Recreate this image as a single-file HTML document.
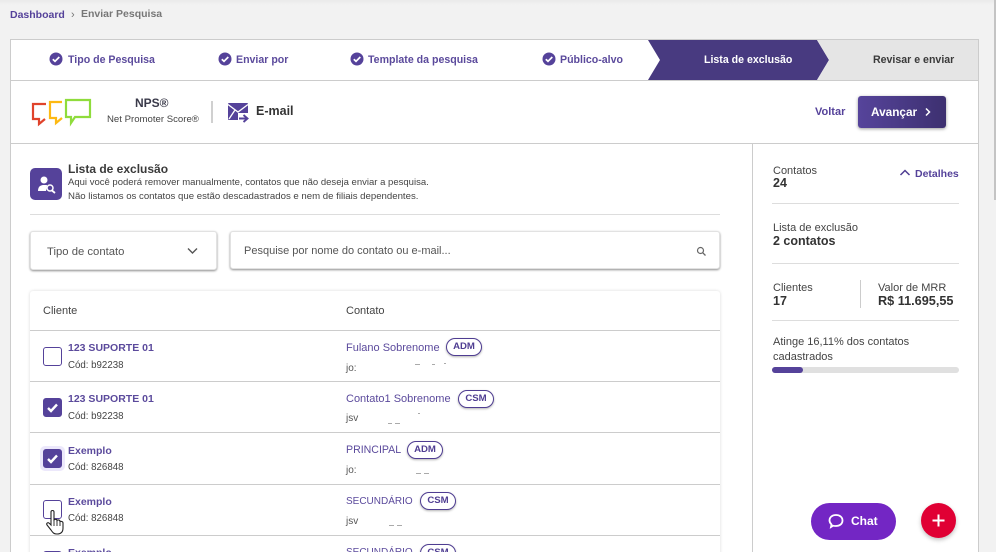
<!DOCTYPE html>
<html lang="pt-BR"><head><meta charset="utf-8"><style>
*{box-sizing:border-box}
html,body{margin:0;width:996px;height:552px;overflow:hidden;background:#f2f2f2;font-family:"Liberation Sans",sans-serif;color:#3a3a3a}
#w{position:absolute;left:0;top:0;width:996px;height:552px;overflow:hidden}
.a{position:absolute;white-space:nowrap;line-height:14px}
.p{color:#55429a}
.b{font-weight:bold}
.l{position:absolute;background:#ccc;height:1px}
.step{font-size:10.6px;font-weight:bold;color:#5b4a9c;top:53px}
.ck{position:absolute;top:52px;width:14px;height:14px}
.cb{position:absolute;left:43px;width:19px;height:19px;border:1px solid #55429a;border-radius:3px;background:#fff}
.cb.on{background:#55429a}
.name{left:68px;font-size:10.5px;font-weight:bold;color:#5b4a9c}
.cod{left:68px;font-size:9.7px;color:#444}
.ct{left:346px;font-size:11px;color:#5b4a9c}
.tag{position:absolute;height:18px;width:36px;border:1px solid #4f3d92;border-radius:9px;font-size:9.6px;font-weight:bold;color:#4f3d92;text-align:center;line-height:16px;box-shadow:0 1px 2px rgba(0,0,0,.3);background:#fff}
.m{left:346px;font-size:10px;color:#555}
.s{font-size:11px;color:#444}
.v{font-size:12.5px;font-weight:bold;color:#333}
.d{position:absolute;height:1px;background:#aaa}
</style></head><body><div id="w">
<div style="position:absolute;left:0;top:0;width:996px;height:5px;background:linear-gradient(#eaeaea,#f2f2f2)"></div>
<div style="position:absolute;left:994px;top:0;width:2px;height:200px;background:#c4c4c4"></div>
<div class="a b p" style="left:10px;top:8px;font-size:10.5px">Dashboard</div>
<div class="a" style="left:71px;top:8px;font-size:11px;color:#777">›</div>
<div class="a b" style="left:81px;top:7px;font-size:10.5px;color:#777">Enviar Pesquisa</div>

<div style="position:absolute;left:10px;top:39px;width:969px;height:530px;background:#fff;border:1px solid #ccc"></div>

<svg style="position:absolute;left:0;top:0" width="996" height="145">
<polygon points="648,40 817,40 829,60 817,80 648,80 660,60" fill="#483a80"/>
<polygon points="817,40 978,40 978,80 817,80 829,60" fill="#e5e5e5"/>
<path d="M11 80.500H978M11 143.500H978" stroke="#ccc"/>
<path d="M212 101V123" stroke="#c4c4c4" stroke-width="1.600"/>
<g fill="none" stroke-width="2.200">
<path d="M46 104H33V119H39V124L45 119" stroke="#e0432b"/>
<path d="M62 102H50V118H56V123L62 118" stroke="#fdb913"/>
<path d="M66 100H90V117H75L71 123V117H66Z" stroke="#8fdc3c"/>
</g>
<rect x="228" y="103" width="20" height="17" rx="1" fill="#55429a"/>
<path d="M228 104.500L238 112L248 104.500M229 119L235 110" fill="none" stroke="#fff" stroke-width="1.300"/>
<rect x="238" y="113" width="11" height="10" fill="#fff"/>
<path d="M239 118.500H246M243.500 115L247.500 118.500L243.500 122" fill="none" stroke="#55429a" stroke-width="1.900"/>
</svg>

<svg class="ck" style="left:49px" viewBox="0 0 14 14"><circle cx="7" cy="7" r="6.500" fill="#55429a"/><path d="M3.800 7.200L6 9.300L10.300 5" fill="none" stroke="#fff" stroke-width="1.700"/></svg>
<div class="a step" style="left:68px">Tipo de Pesquisa</div>
<svg class="ck" style="left:218px" viewBox="0 0 14 14"><circle cx="7" cy="7" r="6.500" fill="#55429a"/><path d="M3.800 7.200L6 9.300L10.300 5" fill="none" stroke="#fff" stroke-width="1.700"/></svg>
<div class="a step" style="left:236px">Enviar por</div>
<svg class="ck" style="left:350px" viewBox="0 0 14 14"><circle cx="7" cy="7" r="6.500" fill="#55429a"/><path d="M3.800 7.200L6 9.300L10.300 5" fill="none" stroke="#fff" stroke-width="1.700"/></svg>
<div class="a step" style="left:368px">Template da pesquisa</div>
<svg class="ck" style="left:542px" viewBox="0 0 14 14"><circle cx="7" cy="7" r="6.500" fill="#55429a"/><path d="M3.800 7.200L6 9.300L10.300 5" fill="none" stroke="#fff" stroke-width="1.700"/></svg>
<div class="a step" style="left:560px">Público-alvo</div>
<div class="a step" style="left:704px;color:#fff">Lista de exclusão</div>
<div class="a step" style="left:873px;color:#3a3a3a">Revisar e enviar</div>

<div class="a b" style="left:135px;top:96px;font-size:12px;color:#3a3a4a">NPS®</div>
<div class="a" style="left:107px;top:113px;font-size:9.600px;color:#444">Net Promoter Score®</div>
<div class="a b" style="left:256px;top:104px;font-size:12.500px;color:#333">E-mail</div>
<div class="a b p" style="left:815px;top:105px;font-size:11px">Voltar</div>
<div style="position:absolute;left:858px;top:96px;width:88px;height:32px;border-radius:3px;background:linear-gradient(90deg,#56449b,#3d3070);box-shadow:0 1px 3px rgba(0,0,0,.4)"></div>
<div class="a b" style="left:871px;top:105px;font-size:11.800px;color:#fff">Avançar</div>
<svg style="position:absolute;left:924px;top:107px" width="8" height="10"><path d="M2 1.500L5.500 5L2 8.500" fill="none" stroke="#fff" stroke-width="1.500"/></svg>

<div style="position:absolute;left:752px;top:144px;width:1px;height:408px;background:#ccc"></div>

<div style="position:absolute;left:30px;top:168px;width:32px;height:32px;border-radius:5px;background:#55429a"></div>
<svg style="position:absolute;left:30px;top:168px" width="32" height="32"><circle cx="14" cy="12" r="3.500" fill="#fff"/><path d="M8 23C8 18 11 17 14 17L17 17L16 23Z" fill="#fff"/><circle cx="20" cy="20" r="3" fill="#55429a" stroke="#fff" stroke-width="1.500"/><path d="M22 22.500L25 25" stroke="#fff" stroke-width="1.800"/></svg>
<div class="a b" style="left:68px;top:162px;font-size:12px;color:#3a3a3a">Lista de exclusão</div>
<div class="a" style="left:68px;top:176px;font-size:9.520px;color:#444">Aqui você poderá remover manualmente, contatos que não deseja enviar a pesquisa.</div>
<div class="a" style="left:68px;top:190px;font-size:9.620px;color:#444">Não listamos os contatos que estão descadastrados e nem de filiais dependentes.</div>
<div class="l" style="left:30px;top:214px;width:690px;background:#ddd"></div>

<div style="position:absolute;left:30px;top:231px;width:187px;height:39px;background:#fff;border:1px solid #e2e2e2;border-radius:3px;box-shadow:0 1px 2px rgba(0,0,0,.45)"></div>
<div class="a" style="left:47px;top:245px;font-size:11.300px;color:#555">Tipo de contato</div>
<svg style="position:absolute;left:186px;top:246px" width="13" height="10"><path d="M2 2.500L6.500 7L11 2.500" fill="none" stroke="#555" stroke-width="1.400"/></svg>
<div style="position:absolute;left:230px;top:231px;width:490px;height:38px;background:#fff;border:1px solid #e2e2e2;border-radius:3px;box-shadow:0 1px 2px rgba(0,0,0,.45)"></div>
<div class="a" style="left:244px;top:244px;font-size:11px;color:#555">Pesquise por nome do contato ou e-mail...</div>
<svg style="position:absolute;left:695px;top:245px" width="12" height="12"><circle cx="5.500" cy="5.500" r="3" fill="none" stroke="#666" stroke-width="1.200"/><path d="M7.800 7.800L10.500 10.500" stroke="#666" stroke-width="1.300"/></svg>

<div style="position:absolute;left:30px;top:291px;width:690px;height:270px;background:#fff;border-radius:3px 3px 0 0;box-shadow:0 0 3px rgba(0,0,0,.15)"></div>
<div class="a" style="left:43px;top:304px;font-size:11px;color:#444">Cliente</div>
<div class="a" style="left:346px;top:304px;font-size:11px;color:#444">Contato</div>
<div class="l" style="left:30px;top:330px;width:690px"></div>
<div class="l" style="left:30px;top:381px;width:690px"></div>
<div class="l" style="left:30px;top:432px;width:690px"></div>
<div class="l" style="left:30px;top:484px;width:690px"></div>
<div class="l" style="left:30px;top:535px;width:690px"></div>

<div class="cb" style="top:347px"></div>
<div class="a name" style="top:341px">123 SUPORTE 01</div>
<div class="a cod" style="top:359px">Cód: b92238</div>
<div class="a ct" style="top:341px">Fulano Sobrenome</div><div class="tag" style="left:446px;top:338px">ADM</div>
<div class="a m" style="top:362px">jo:</div>
<div class="d" style="left:415px;top:364px;width:5px"></div><div class="d" style="left:432px;top:364px;width:3px"></div><div class="d" style="left:444px;top:363px;width:2px"></div>

<div class="cb on" style="top:398px"></div>
<svg style="position:absolute;left:43px;top:398px" width="19" height="19"><path d="M5 10L8 13L14 6.500" fill="none" stroke="#fff" stroke-width="2.400"/></svg>
<div class="a name" style="top:392px">123 SUPORTE 01</div>
<div class="a cod" style="top:410px">Cód: b92238</div>
<div class="a ct" style="top:392px">Contato1 Sobrenome</div><div class="tag" style="left:458px;top:390px">CSM</div>
<div class="a m" style="top:412px">jsv</div>
<div class="d" style="left:388px;top:423px;width:4px"></div><div class="d" style="left:395px;top:423px;width:5px"></div><div class="d" style="left:418px;top:413px;width:2px"></div>

<div style="position:absolute;left:40px;top:446px;width:25px;height:25px;border-radius:5px;background:#ece8fb"></div>
<div class="cb on" style="top:449px"></div>
<svg style="position:absolute;left:43px;top:449px" width="19" height="19"><path d="M5 10L8 13L14 6.500" fill="none" stroke="#fff" stroke-width="2.400"/></svg>
<div class="a name" style="top:444px">Exemplo</div>
<div class="a cod" style="top:461px">Cód: 826848</div>
<div class="a ct" style="top:443px;font-size:10.600px">PRINCIPAL</div><div class="tag" style="left:407px;top:441px">ADM</div>
<div class="a m" style="top:464px">jo:</div>
<div class="d" style="left:416px;top:473px;width:5px"></div><div class="d" style="left:424px;top:473px;width:5px"></div>

<div class="cb" style="top:500px"></div>
<div class="a name" style="top:495px">Exemplo</div>
<div class="a cod" style="top:512px">Cód: 826848</div>
<div class="a ct" style="top:495px;font-size:10px">SECUNDÁRIO</div><div class="tag" style="left:420px;top:492px">CSM</div>
<div class="a m" style="top:515px">jsv</div>
<div class="d" style="left:389px;top:525px;width:5px"></div><div class="d" style="left:397px;top:525px;width:5px"></div>

<div class="cb" style="top:551px"></div>
<div class="a name" style="top:546px">Exemplo</div>
<div class="a ct" style="top:546px;font-size:10px">SECUNDÁRIO</div><div class="tag" style="left:420px;top:544px">CSM</div>

<svg style="position:absolute;left:45px;top:508px" width="22" height="28" viewBox="0 0 22 28"><path d="M6 4C6 2 9 2 9 4V12C10 11 12 11 12 12.500C13 11.500 15 12 15 13.500C16 13 18 13.500 18 15V20C18 24 16 26 12 26C9 26 8 25 6 22L2 17C1 15 3 14 4.500 15.500L6 17Z" fill="#fff" stroke="#222" stroke-width="1.100"/><path d="M9 12V18M12 12.500V18M15 13.500V18" stroke="#222" stroke-width=".9"/></svg>

<div class="a s" style="left:773px;top:164px">Contatos</div>
<div class="a v" style="left:773px;top:176px">24</div>
<svg style="position:absolute;left:899px;top:168px" width="12" height="9"><path d="M1.500 7L6 2.500L10.500 7" fill="none" stroke="#4f3d92" stroke-width="1.500"/></svg>
<div class="a b p" style="left:915px;top:167px;font-size:10.500px">Detalhes</div>
<div class="l" style="left:772px;top:203px;width:187px;background:#ddd"></div>
<div class="a s" style="left:773px;top:221px">Lista de exclusão</div>
<div class="a v" style="left:773px;top:234px">2 contatos</div>
<div class="l" style="left:772px;top:263px;width:187px;background:#ddd"></div>
<div class="a s" style="left:773px;top:281px">Clientes</div>
<div class="a v" style="left:773px;top:294px">17</div>
<div style="position:absolute;left:860px;top:280px;width:1px;height:28px;background:#ccc"></div>
<div class="a s" style="left:878px;top:281px">Valor de MRR</div>
<div class="a v" style="left:878px;top:294px;font-size:12.700px">R$ 11.695,55</div>
<div class="l" style="left:772px;top:320px;width:187px;background:#ddd"></div>
<div class="a s" style="left:773px;top:335px">Atinge 16,11% dos contatos</div>
<div class="a s" style="left:773px;top:350px">cadastrados</div>
<div style="position:absolute;left:772px;top:367px;width:187px;height:6px;border-radius:3px;background:#e0e0e0"></div>
<div style="position:absolute;left:772px;top:367px;width:31px;height:6px;border-radius:3px;background:#55429a"></div>

<div style="position:absolute;left:811px;top:503px;width:85px;height:37px;border-radius:19px;background:#7326c4"></div>
<svg style="position:absolute;left:827px;top:512px" width="18" height="18"><path d="M4 15L4.500 12.500C3 11 2.500 10 2.500 8.500C2.500 5 5.500 3 9 3C12.500 3 15.500 5 15.500 8.500C15.500 12 12.500 14 9 14C8 14 7 14 6 13.700Z" fill="none" stroke="#fff" stroke-width="1.800"/></svg>
<div class="a b" style="left:851px;top:514px;font-size:12px;color:#fff">Chat</div>
<div style="position:absolute;left:921px;top:503px;width:35px;height:35px;border-radius:50%;background:#e00034;box-shadow:0 2px 4px rgba(0,0,0,.25)"></div>
<svg style="position:absolute;left:921px;top:503px" width="35" height="35"><path d="M17.500 11.500V23.500M11.500 17.500H23.500" stroke="#fff" stroke-width="2"/></svg>
</div></body></html>
